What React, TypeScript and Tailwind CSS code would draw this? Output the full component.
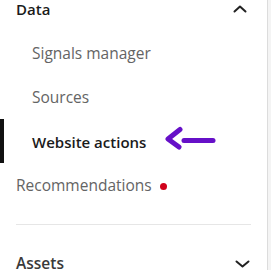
export default function App() {
  const font = { fontFamily: '"Open Sans", "Noto Sans", sans-serif' };
  return (
    <div className="flex h-[270px] w-[271px] overflow-hidden bg-[#f4f4f4]" style={font}>
      <div className="flex h-full w-[268px] flex-col border-r border-[#dcdcdc] bg-white">
        <div className="mb-[14px] flex h-[18px] shrink-0 items-center justify-between pl-4 pr-[20px]">
          <span className="text-[15px] font-semibold text-[#1b1b1b]">Data</span>
          <svg width="14" height="8" viewBox="0 0 14 8" fill="none">
            <path d="M1.5 6.5L7 1.5L12.5 6.5" stroke="#222" strokeWidth="2" strokeLinecap="round" strokeLinejoin="round" />
          </svg>
        </div>

        <div className="flex h-[44px] shrink-0 items-center pl-8 text-[15.5px] text-[#646464]">Signals manager</div>
        <div className="flex h-[44px] shrink-0 items-center pl-8 text-[15.5px] text-[#646464]">Sources</div>
        <div className="relative flex h-[44px] shrink-0 items-center pl-8">
          <div className="absolute left-0 top-[-1px] h-full w-1 bg-[#111]" />
          <span className="text-[15px] font-semibold text-[#1b1b1b]">Website actions</span>
          <svg className="absolute left-[162px] top-[6px]" width="58" height="26" viewBox="0 0 58 26" fill="none">
            <path d="M22 14.5H51" stroke="#6610c8" strokeWidth="5" strokeLinecap="round" />
            <path d="M18 3.5L6 13L17 21" stroke="#6610c8" strokeWidth="5" strokeLinecap="round" strokeLinejoin="round" />
          </svg>
        </div>
        <div className="flex h-[44px] shrink-0 items-center gap-2 pl-4 text-[15.5px] text-[#646464]">
          <span>Recommendations</span>
          <span className="h-[7px] w-[7px] rounded-full bg-[#d0021b]" />
        </div>

        <div className="mx-4 mt-[16px] shrink-0 border-t border-[#e6e6e6]" />

        <div className="mt-[27px] flex shrink-0 items-center justify-between pl-4 pr-[17px]">
          <span className="text-[15.5px] font-semibold text-[#3a3a3a]">Assets</span>
          <svg width="15" height="8" viewBox="0 0 15 8" fill="none">
            <path d="M1.5 1.5L7.5 6.5L13.5 1.5" stroke="#222" strokeWidth="2" strokeLinecap="round" strokeLinejoin="round" />
          </svg>
        </div>
      </div>
    </div>
  );
}
